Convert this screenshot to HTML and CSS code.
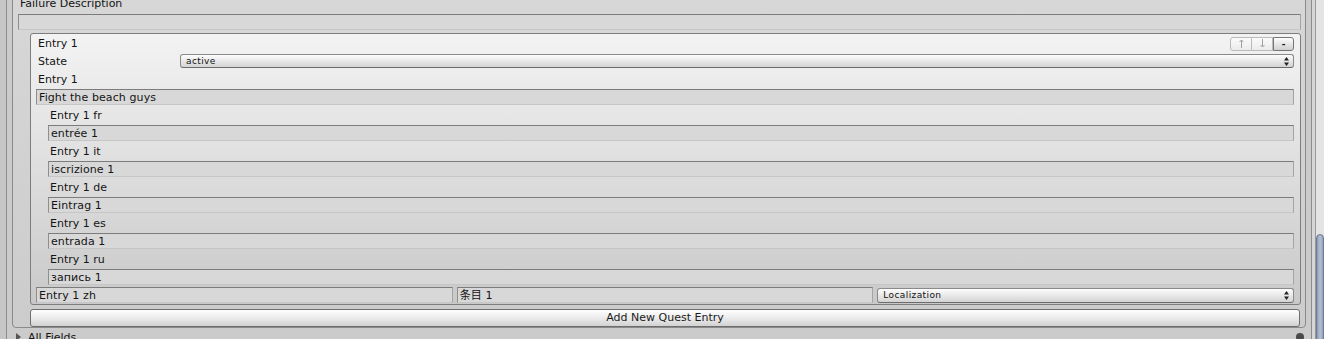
FILE: index.html
```html
<html>
<head>
    <meta charset="utf-8" />
    <meta name="viewport" content="width=device-width, initial-scale=1" />
    <title>Quest Entries</title>
    <link rel="stylesheet" href="styles.css">
</head>

<body>
    <div class="window">
        <div class="panel">
            <div class="group">
                <div class="label-row">Failure Description</div>
                <div class="field wide"></div>

                <div class="entry">
                    <div class="row">
                        <span class="label">Entry 1</span>
                        <div class="order-buttons">
                            <span class="order-btn up">
                                <svg width="5" height="9" viewBox="0 0 5 9"><path d="M2.5 1 V9 M0.5 3 L2.5 1 L4.5 3" stroke="#a0a0a0" stroke-width="1" fill="none"/></svg>
                            </span>
                            <span class="order-btn down">
                                <svg width="5" height="9" viewBox="0 0 5 9"><path d="M2.5 0 V8 M0.5 6 L2.5 8 L4.5 6" stroke="#a0a0a0" stroke-width="1" fill="none"/></svg>
                            </span>
                            <span class="order-btn remove">-</span>
                        </div>
                    </div>
                    <div class="row">
                        <span class="label">State</span>
                        <div class="popup">
                            <span>active</span>
                            <svg class="arrows" width="5" height="9" viewBox="0 0 5 9"><path d="M2.5 0 L5 3.5 L0 3.5 Z M0 5.5 L5 5.5 L2.5 9 Z" fill="#222"/></svg>
                        </div>
                    </div>
                    <div class="row">
                        <span class="label">Entry 1</span>
                    </div>
                    <div class="field">Fight the beach guys</div>

                    <div class="row indent"><span class="label">Entry 1 fr</span></div>
                    <div class="field indent">entrée 1</div>
                    <div class="row indent"><span class="label">Entry 1 it</span></div>
                    <div class="field indent">iscrizione 1</div>
                    <div class="row indent"><span class="label">Entry 1 de</span></div>
                    <div class="field indent">Eintrag 1</div>
                    <div class="row indent"><span class="label">Entry 1 es</span></div>
                    <div class="field indent">entrada 1</div>
                    <div class="row indent"><span class="label">Entry 1 ru</span></div>
                    <div class="field indent">запись 1</div>

                    <div class="split">
                        <div class="field">Entry 1 zh</div>
                        <div class="field">条目 1</div>
                        <div class="popup">
                            <span>Localization</span>
                            <svg class="arrows" width="5" height="9" viewBox="0 0 5 9"><path d="M2.5 0 L5 3.5 L0 3.5 Z M0 5.5 L5 5.5 L2.5 9 Z" fill="#222"/></svg>
                        </div>
                    </div>
                </div>

                <div class="add-button">Add New Quest Entry</div>
            </div>

            <div class="foldout">
                <svg class="fold-arrow" width="5" height="8" viewBox="0 0 5 8"><path d="M0 0 L5 4 L0 8 Z" fill="#555"/></svg>
                <span>All Fields</span>
                <span class="help-dot"></span>
            </div>
        </div>
        <div class="gutter"></div>
        <div class="scrollbar">
            <div class="thumb"></div>
        </div>
    </div>
</body>

</html>
```

FILE: styles.css
```css
body{
    margin: 0;
    padding: 0;
    overflow: hidden;
    background-color: #c6c6c6;
    font-family: "DejaVu Sans", "Noto Sans CJK SC", sans-serif;
    font-size: 11px;
    color: #141414;
}
.window {
    display: flex;
    height: 339px;
}
.panel {
    flex: 1;
    min-width: 0;
    margin-left: 6px;
    border-left: 1px solid #8c8c8c;
    border-right: 1px solid #8c8c8c;
    background-color: #cbcbcb;
}
.group {
    margin: -8px 5px 0 5px;
    padding-top: 2px;
    border: 1px solid #8a8a8a;
    border-radius: 0 0 4px 4px;
    background: linear-gradient(#d7d7d7, #cccccc);
}
.label-row {
    height: 18px;
    line-height: 18px;
    padding-left: 7px;
}
.field {
    height: 16px;
    box-sizing: border-box;
    border: 1px solid;
    border-color: #7c7c7c #a4a4a4 #c6c6c6 #8e8e8e;
    background-color: #d8d8d8;
    padding: 0 2px;
    line-height: 15px;
    white-space: nowrap;
    overflow: hidden;
    letter-spacing: 0.1px;
}
.field.wide {
    margin: 1px 4px 3px 5px;
}

/* quest entry box */
.entry {
    margin: 0 4px 0 17px;
    padding: 0 6px 0 5px;
    border: 1px solid #7d7d7d;
    border-radius: 3px;
    background: linear-gradient(#f3f3f3, #c9c9c9);
}
.entry > .field {
    margin: 1px 0;
}
.row {
    display: flex;
    align-items: center;
    height: 18px;
}
.label {
    flex: none;
    width: 144px;
    box-sizing: border-box;
    padding-left: 2px;
    white-space: nowrap;
}
.indent {
    margin-left: 12px;
}
.entry > .field.indent {
    margin-left: 12px;
}

.popup {
    flex: 1;
    min-width: 0;
    height: 14px;
    box-sizing: border-box;
    display: flex;
    align-items: center;
    justify-content: space-between;
    padding: 0 4px 0 5px;
    border: 1px solid #8a8a8a;
    border-bottom-color: #6c6c6c;
    border-radius: 3px;
    background: linear-gradient(#fdfdfd, #e6e6e6 55%, #d3d3d3);
    font-size: 9px;
    letter-spacing: 0.4px;
    color: #111;
}
.arrows {
    flex: none;
}

.order-buttons {
    display: flex;
    margin-left: auto;
    height: 14px;
    margin-top: 1px;
}
.order-btn {
    width: 21px;
    box-sizing: border-box;
    display: flex;
    align-items: center;
    justify-content: center;
    border: 1px solid #bababa;
    border-left-width: 0;
    background: linear-gradient(#fbfbfb, #ebebeb);
}
.order-btn.up {
    width: 22px;
    border-left-width: 1px;
    border-radius: 3px 0 0 3px;
}
.order-btn.remove {
    border: 1px solid #777777;
    border-radius: 0 3px 3px 0;
    background: linear-gradient(#fdfdfd, #e2e2e2 60%, #d0d0d0);
    color: #111;
    font-size: 9px;
    font-weight: bold;
}

.split {
    display: grid;
    grid-template-columns: 1fr 1fr 1fr;
    gap: 4px;
    align-items: center;
    height: 18px;
}
.split .field {
    margin: 0;
}
.split .popup {
    height: 15px;
}

.add-button {
    height: 18px;
    box-sizing: border-box;
    margin: 4px 5px 0 17px;
    border: 1px solid #6e6e6e;
    border-radius: 3px;
    background: linear-gradient(#fefefe, #ebebeb 50%, #d2d2d2);
    text-align: center;
    line-height: 16px;
    color: #1a1a1a;
}

.foldout {
    display: flex;
    align-items: center;
    height: 18px;
    padding-left: 9px;
}
.fold-arrow {
    margin-right: 7px;
}
.help-dot {
    margin-left: auto;
    margin-right: 7px;
    width: 8px;
    height: 8px;
    border-radius: 50%;
    background-color: #4a4a4a;
}

.gutter {
    width: 3px;
    background-color: #d6d6d6;
}
.scrollbar {
    width: 9px;
    box-sizing: border-box;
    padding-top: 234px;
    border-left: 1px solid #9a9a9a;
    background-color: #e4e4e4;
}
.thumb {
    height: 120px;
    box-sizing: border-box;
    border: 1px solid #6b7b96;
    border-radius: 5px 5px 0 0;
    background: linear-gradient(90deg, #8c9ab2, #b6c1d3, #94a2b9);
}
```
